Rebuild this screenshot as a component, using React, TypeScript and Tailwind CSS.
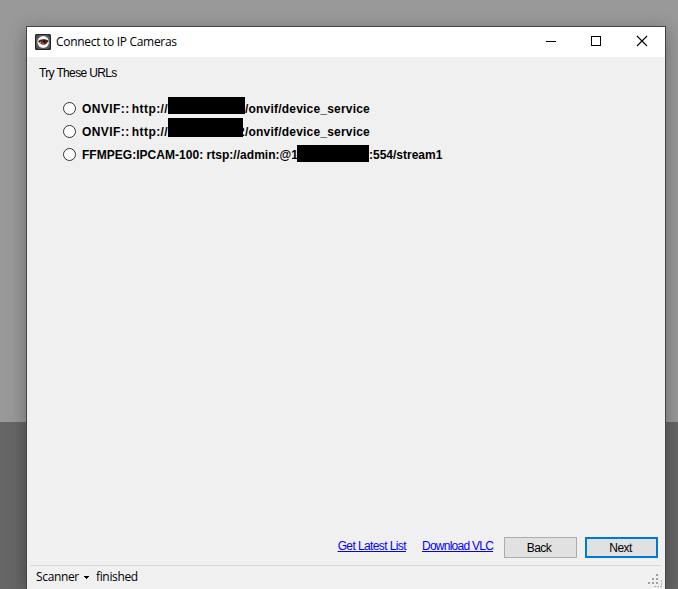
import { useState } from 'react';

const urls = [
  {
    id: 'onvif-1',
    prefix: 'ONVIF:: http://',
    tail: '',
    suffix: '/onvif/device_service',
    prefixClass: 'w-[86px] tracking-[0.42px] [word-spacing:-1.5px]',
    maskClass: 'w-[77px] h-[17px]',
    suffixClass: 'tracking-[0.2px]',
  },
  {
    id: 'onvif-2',
    prefix: 'ONVIF:: http://',
    tail: '2',
    suffix: '/onvif/device_service',
    prefixClass: 'w-[86px] tracking-[0.42px] [word-spacing:-1.5px]',
    maskClass: 'w-[75px] h-[19px] -mt-[2px]',
    suffixClass: 'tracking-[0.2px]',
  },
  {
    id: 'ffmpeg',
    prefix: 'FFMPEG:IPCAM-100: rtsp://admin:@1',
    tail: '',
    suffix: ':554/stream1',
    prefixClass: 'w-[215px] tracking-[0.03px]',
    maskClass: 'w-[72px] h-[17px] mt-[2px]',
    suffixClass: 'tracking-[0px]',
  },
];

function AppIcon() {
  return (
    <svg width="16" height="16" viewBox="0 0 16 16">
      <rect width="16" height="16" rx="1.5" fill="#222" />
      <rect x="1" y="1" width="14" height="14" rx="3" fill="#5a5a5a" />
      <ellipse cx="8.2" cy="8" rx="5.8" ry="6" fill="#f6f6f6" />
      <path d="M3 7.5C5 4.6 11 4.4 14 7.2L12.6 8C12 10.8 7 11.6 5 9Z" fill="#33231d" />
      <path d="M4.5 8.2L6.2 7.2L6.5 9.4Z" fill="#bbb" />
      <circle cx="8.6" cy="8.2" r="2.4" fill="#7a2e14" />
      <circle cx="9" cy="7.6" r="1.3" fill="#0c0808" />
      <rect x="7" y="8.6" width="1.6" height="1.4" fill="#e0562a" />
    </svg>
  );
}

function TitleBar() {
  return (
    <div className="flex h-[30px] shrink-0 items-center bg-white pl-2">
      <AppIcon />
      <span className="ml-[5px] flex-1 whitespace-nowrap font-['Open_Sans',sans-serif] text-[12px] tracking-[-0.3px]">
        Connect to IP Cameras
      </span>
      <svg width="138" height="30" shapeRendering="crispEdges" fill="none" stroke="#000">
        <path d="M19 14.5H29" />
        <rect x="64.5" y="9.5" width="9" height="9" />
        <path d="M110 9L120 19M120 9L110 19" shapeRendering="auto" strokeWidth="1.1" />
      </svg>
    </div>
  );
}

function Grip() {
  return (
    <svg width="16" height="16" shapeRendering="crispEdges" fill="#a0a0a0">
      <path d="M9 2h2v2h-2zM5 6h2v2h-2zM9 6h2v2h-2zM1 10h2v2h-2zM5 10h2v2h-2zM9 10h2v2h-2z" />
      <path d="M7 14.5H14.5V8" fill="none" stroke="#b4b4b4" strokeDasharray="2 1" />
    </svg>
  );
}

export default function App() {
  const [selected, setSelected] = useState<string | null>(null);

  return (
    <div className="h-[589px] w-[678px] overflow-hidden bg-[linear-gradient(#999_422px,#666_422px)] pl-[26px] pt-[26px] font-['Liberation_Sans',sans-serif] text-black">
      <div className="flex h-[563px] w-[640px] flex-col border-x border-t border-[#444] bg-[#f0f0f0] shadow-[0_4px_18px_rgba(0,0,0,0.3)]">
        <TitleBar />

        {/* Content */}
        <div className="flex flex-1 flex-col">
          <div className="pl-3 pt-[9px] text-[12px] leading-[14px] tracking-[-0.65px]">Try These URLs</div>
          <div className="mt-[17px] flex flex-col pl-[36px]">
            {urls.map(u => (
              <button key={u.id} onClick={() => setSelected(u.id)} className="flex h-[23px] items-start text-left text-[12px] font-bold leading-[25px]">
                <span className="mt-[5px] flex size-[13px] shrink-0 items-center justify-center rounded-full border border-[#333] bg-white">
                  {selected === u.id && <span className="size-[7px] rounded-full bg-[#333]" />}
                </span>
                <span className={`ml-[6px] shrink-0 whitespace-nowrap ${u.prefixClass}`}>{u.prefix}</span>
                <span className={`relative shrink-0 bg-black ${u.maskClass}`} />
                {u.tail && <span className="-ml-[5px] w-[7px] shrink-0">{u.tail}</span>}
                <span className={`whitespace-nowrap ${u.suffixClass}`}>{u.suffix}</span>
              </button>
            ))}
          </div>
        </div>

        {/* Actions */}
        <div className="flex h-[21px] shrink-0 items-start justify-end pr-[7px] text-[12px]">
          <a href="#" className="mr-4 mt-[2px] whitespace-nowrap leading-[14px] tracking-[-0.6px] text-[#0000ff] underline">Get Latest List</a>
          <a href="#" className="mr-[10px] mt-[2px] w-[72px] whitespace-nowrap leading-[14px] tracking-[-0.75px] text-[#0000ff] underline">Download VLC</a>
          <button className="h-[21px] w-[73px] border border-[#adadad] bg-[#e1e1e1] pr-[3px] pt-px leading-[19px] tracking-[-0.6px]">Back</button>
          <button className="ml-2 h-[21px] w-[73px] border-2 border-[#0078d7] bg-[#e1e1e1] pr-[2px] pt-px leading-[17px] tracking-[-0.6px]">Next</button>
        </div>

        {/* Status strip */}
        <div className="ml-[3px] mr-[4px] mt-[7px] flex h-[24px] shrink-0 border-t border-[#d7d7d7] pl-[6px] font-['Open_Sans',sans-serif] text-[12px] leading-[22px] tracking-[-0.35px]">
          <span className="w-[48px]">Scanner</span>
          <svg width="6" height="22" shapeRendering="crispEdges"><path d="M0 10h5v1h-1v1h-1v1h-1v-1h-1v-1h-1z" /></svg>
          <span className="ml-[6px] flex-1">finished</span>
          <span className="-mr-[2px] mt-[6px]"><Grip /></span>
        </div>
      </div>
    </div>
  );
}
